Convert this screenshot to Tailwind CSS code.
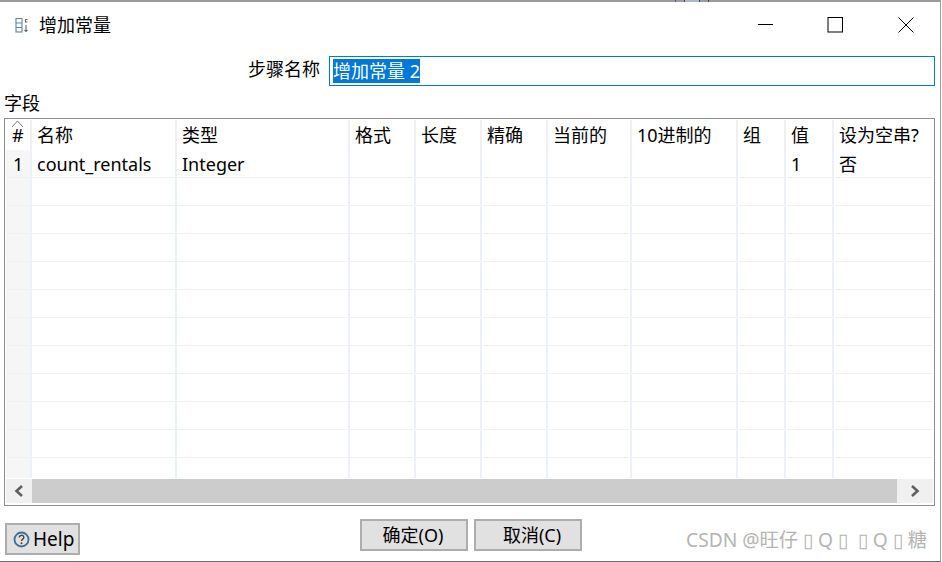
<!DOCTYPE html>
<html><head><meta charset="utf-8"><script src="https://cdn.jsdelivr.net/npm/@tailwindcss/browser@4"></script></head>
<body class="w-[942px] h-[562px] overflow-hidden bg-white text-black font-['Noto_Sans','Noto_Sans_CJK_SC',sans-serif]">
<div class="w-[941px] h-[562px] border-b border-b-[#6e6e6e] border-r border-r-[#a0a0a0] flex flex-col relative">
<div class="h-[2px] shrink-0 bg-[#9a9a9a] flex">
<div class="ml-[675px] w-px bg-[#4a5a6a]"></div><div class="ml-[8px] w-px bg-[#3a4a5a]"></div><div class="w-[14px] bg-[#a9b7c6]"></div><div class="w-px bg-[#3a4a5a]"></div><div class="ml-[8px] w-px bg-[#3a4a5a]"></div>
</div>
<header class="h-[46px] flex items-center shrink-0">
<svg class="ml-[15px] w-[14px] h-[15px]" viewBox="0 0 14 15" fill="none" stroke="#5f85a3" stroke-width="1.100"><rect x="1" y=".5" width="6" height="13.500"/><path d="M1 5h6M1 9.500h6"/><path d="M12.500 1.500h-2v2.500h2M11 7v6.500M9.500 12l1.500 1.500 1.500-1.500" stroke="#666"/></svg>
<span class="ml-[10px] text-[18px] leading-none">增加常量</span>
<div class="ml-auto flex items-center">
<svg class="w-[16px] h-[16px] mr-[54px]" viewBox="0 0 16 16" stroke="#000" fill="none"><path d="M1 7.500h15"/></svg>
<svg class="w-[16px] h-[16px] mr-[55px]" viewBox="0 0 16 16" stroke="#000" fill="none"><rect x="1" y=".5" width="14.500" height="14.500"/></svg>
<svg class="w-[16px] h-[16px] mr-[26px]" viewBox="0 0 16 16" stroke="#000" fill="none"><path d="M.5.5l15 15M15.500.5l-15 15"/></svg>
</div>
</header>
<div class="h-[30px] flex items-center shrink-0 mt-[8px]">
<label class="w-[320px] text-right text-[18px] leading-none mb-[5px]">步骤名称</label>
<div class="ml-[9px] w-[606px] h-[30px] border border-[#0078d7] flex items-center pl-[3px] text-[18px] leading-none"><span class="bg-[#0078d7] text-white h-[24px] flex items-center">增加常量 2</span></div>
</div>
<div class="ml-[4px] mt-[6px] text-[18px] leading-[22px] h-[22px] shrink-0">字段</div>
<div class="ml-[4px] mt-[4px] w-[931px] h-[388px] shrink-0 border border-[#8a8e91] p-px flex flex-col">
<div class="h-[358px] shrink-0 grid grid-cols-[26px_145px_173px_66px_66px_66px_84px_106px_48px_48px_1fr] grid-rows-[30px_repeat(11,28px)_20px] text-[18px] leading-none overflow-hidden [&>div]:flex [&>div]:items-center [&>div]:pl-[5px] [&>div]:border-b [&>div]:border-b-[#f0f0f0] [&>div]:border-r-2 [&>div]:border-r-[#ebf1fa] [&>div:nth-child(-n+11)]:border-b-0 [&>div:nth-child(-n+11)]:border-r-[#f0f0f0] [&>div:nth-child(11n)]:border-r-0 [&>div:nth-last-child(-n+11)]:border-b-0 [&>div:nth-child(11n+12)]:bg-[#f6f6f6]">
<div class="relative !pl-[6px]"><svg class="absolute left-[5px] top-[0px] w-[13px] h-[8px]" viewBox="0 0 13 8" fill="none" stroke="#777"><path d="M1 7l5.500-6 5.500 6"/></svg><span>#</span></div>
<div>名称</div><div>类型</div><div>格式</div><div>长度</div><div>精确</div><div>当前的</div><div>10进制的</div><div>组</div><div>值</div><div>设为空串?</div>
<div class="!pl-[7px]">1</div><div>count_rentals</div><div>Integer</div><div></div><div></div><div></div><div></div><div></div><div></div><div>1</div><div>否</div>
<div></div><div></div><div></div><div></div><div></div><div></div><div></div><div></div><div></div><div></div><div></div>
<div></div><div></div><div></div><div></div><div></div><div></div><div></div><div></div><div></div><div></div><div></div>
<div></div><div></div><div></div><div></div><div></div><div></div><div></div><div></div><div></div><div></div><div></div>
<div></div><div></div><div></div><div></div><div></div><div></div><div></div><div></div><div></div><div></div><div></div>
<div></div><div></div><div></div><div></div><div></div><div></div><div></div><div></div><div></div><div></div><div></div>
<div></div><div></div><div></div><div></div><div></div><div></div><div></div><div></div><div></div><div></div><div></div>
<div></div><div></div><div></div><div></div><div></div><div></div><div></div><div></div><div></div><div></div><div></div>
<div></div><div></div><div></div><div></div><div></div><div></div><div></div><div></div><div></div><div></div><div></div>
<div></div><div></div><div></div><div></div><div></div><div></div><div></div><div></div><div></div><div></div><div></div>
<div></div><div></div><div></div><div></div><div></div><div></div><div></div><div></div><div></div><div></div><div></div>
<div></div><div></div><div></div><div></div><div></div><div></div><div></div><div></div><div></div><div></div><div></div>
</div>
<div class="h-[24px] flex shrink-0 mt-px">
<div class="w-[26px] bg-[#f0f0f0] flex items-center justify-center"><svg class="w-[10px] h-[12px]" viewBox="0 0 10 12" fill="none" stroke="#606060" stroke-width="2.600"><path d="M8 1L2.500 6 8 11"/></svg></div>
<div class="flex-1 bg-[#cccccc]"></div>
<div class="w-[36px] bg-[#f0f0f0] flex items-center justify-center"><svg class="w-[10px] h-[12px]" viewBox="0 0 10 12" fill="none" stroke="#606060" stroke-width="2.600"><path d="M2 1l5.500 5L2 11"/></svg></div>
</div>
</div>
<footer class="relative flex-1">
<button class="absolute left-[5px] top-[17px] w-[75px] h-[32px] bg-[#e1e1e1] border-2 border-[#adadad] flex items-center pl-[6px] text-[19px] leading-none"><svg class="w-[17px] h-[17px] mr-[3px]" viewBox="0 0 17 17" fill="none"><circle cx="8.500" cy="8.500" r="7" stroke="#3f6f94" stroke-width="1.800"/><path d="M6.300 6.600c0-3 4.500-3 4.500-.2 0 1.700-2.300 1.800-2.300 3.600" stroke="#444" stroke-width="1.400"/><circle cx="8.500" cy="12.300" r="1" fill="#444"/></svg>Help</button>
<button class="absolute left-[360px] top-[13px] w-[108px] h-[32px] bg-[#e1e1e1] border-2 border-[#adadad] text-[18px] leading-none pr-[2px]">确定(O)</button>
<button class="absolute left-[474px] top-[13px] w-[108px] h-[32px] bg-[#e1e1e1] border-2 border-[#adadad] text-[18px] leading-none pl-[8px]">取消(C)</button>
<div class="absolute right-[13px] top-[24px] text-[19.200px] leading-none text-[#b4b4b4] whitespace-nowrap">CSDN @旺仔 ▯ Q ▯ &nbsp;▯ Q ▯ 糖</div>
</footer>
</div>
</body></html>
